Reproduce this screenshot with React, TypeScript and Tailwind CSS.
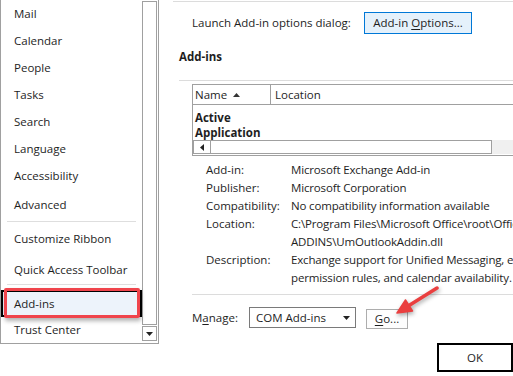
import React from "react"

const navTop = ['Mail', 'Calendar', 'People', 'Tasks', 'Search', 'Language', 'Accessibility']

const details: { label: string, lines: string[] }[] = [
	{ label: 'Add-in:', lines: ['Microsoft Exchange Add-in'] },
	{ label: 'Publisher:', lines: ['Microsoft Corporation'] },
	{ label: 'Compatibility:', lines: ['No compatibility information available'] },
	{ label: 'Location:', lines: ['C:\\Program Files\\Microsoft Office\\root\\Office16\\', 'ADDINS\\UmOutlookAddin.dll'] },
	{ label: 'Description:', lines: ['Exchange support for Unified Messaging, e-mail', 'permission rules, and calendar availability.'] },
]

const NavItem = ({ label, h }: { label: string, h: string }) => (
	<div className={`flex items-center pl-[13px] whitespace-nowrap ${h}`}>{ label }</div>
)

const LeftNav = () => (
	<div className="w-[159px] h-[344px] shrink-0 border-l border-r border-b border-[#a0a0a0] flex">
		<div className="w-[141px] flex flex-col">
			{ navTop.map((n) => <NavItem key={ n } label={ n } h="h-[27px]" />) }
			<NavItem label="Advanced" h="h-[32px]" />
			<div className="h-px mx-[6px] bg-[#dedede]" />
			<NavItem label="Customize Ribbon" h="h-[34px]" />
			<NavItem label="Quick Access Toolbar" h="h-[28px]" />
			<div className="h-px mx-[6px] bg-[#dedede]" />
			{/* selected item */ }
			<div className="relative h-[30px] mt-[3px]">
				<div className="absolute left-0 right-0 top-[2px] bottom-[1px] border-2 border-black bg-[#edf3fb]" />
				<div className="absolute left-[3px] right-[2px] top-0 bottom-0 border-[3px] border-[#f0444c] rounded-[2px] shadow-[1px_3px_4px_rgba(0,0,0,0.3)]" />
				<div className="relative h-full flex items-center pl-[13px] pt-px">Add-ins</div>
			</div>
			<NavItem label="Trust Center" h="h-[24px]" />
		</div>
		<div className="w-[15px] flex flex-col pt-px pb-[2px]">
			<div className="flex-1 border border-[#a0a0a0]" />
			<div className="h-[15px] mt-px border border-[#a0a0a0] flex items-center justify-center">
				<svg width="7" height="4" viewBox="0 0 7 4"><path d="M0 0h7L3.5 4z" fill="#222" /></svg>
			</div>
		</div>
	</div>
)

const RightPane = () => (
	<div className="flex-1 ml-[14px] mt-px border-t border-[#dcdcdc] min-w-0">
		<div className="mt-[10px] pl-[19px] flex items-center h-[22px]">
			<span className="w-[172px] whitespace-nowrap">Launch Add-in options dialog:</span>
			<button className="w-[108px] h-[22px] border border-[#0078d7] bg-[#e5f1fb] flex items-center justify-center whitespace-nowrap">
				Add-in&nbsp;<span className="underline underline-offset-2">O</span>ptions...
			</button>
		</div>

		<div className="mt-[15px] h-[16px] leading-[16px] pl-[6px] font-bold">Add-ins</div>
		<div className="mt-[15px] ml-[6px] h-px bg-[#dcdcdc]" />

		{/* list */ }
		<div className="mt-[3px] ml-[19px] w-[340px] border border-[#a0a0a0]">
			<div className="h-[20px] border-b border-[#a0a0a0] flex">
				<div className="w-[78px] border-r border-[#a0a0a0] flex items-center pl-[2px] gap-[6px]">
					Name
					<svg width="7" height="4" viewBox="0 0 7 4"><path d="M0 4h7L3.5 0z" fill="#333" /></svg>
				</div>
				<div className="flex items-center pl-[4px]">Location</div>
			</div>
			<div className="pt-[5px] pl-[2px] leading-[15px] font-bold">
				<div>Active</div>
				<div>Application</div>
			</div>
			<div className="h-[14px] mb-px flex">
				<div className="w-[18px] border border-[#a0a0a0] flex items-center justify-center">
					<svg width="4" height="7" viewBox="0 0 4 7"><path d="M4 0v7L0 3.5z" fill="#222" /></svg>
				</div>
				<div className="w-[281px] border border-l-0 border-[#a0a0a0]" />
				<div className="flex-1 bg-[#f0f0f0]" />
			</div>
		</div>

		<div className="mt-[5px] pl-[33px] leading-[18px]">
			{ details.map((d) => (
				<div key={ d.label } className="flex">
					<div className="w-[85px] shrink-0">{ d.label }</div>
					<div className="whitespace-nowrap tracking-[-0.15px]">
						{ d.lines.map((l) => <div key={ l }>{ l }</div>) }
					</div>
				</div>
			)) }
		</div>

		<div className="mt-[7px] ml-[19px] h-px bg-[#dcdcdc]" />

		<div className="mt-[12px] ml-[19px] flex items-start">
			<div className="w-[57px] h-[21px] leading-[21px]">M<span className="underline underline-offset-2">a</span>nage:</div>
			<div className="w-[107px] h-[21px] border border-[#7a7a7a] flex items-center justify-between pl-[6px] pr-[5px]">
				<span>COM Add-ins</span>
				<svg width="7" height="4" viewBox="0 0 7 4"><path d="M0 0h7L3.5 4z" fill="#222" /></svg>
			</div>
			<button className="ml-[10px] mt-[2px] w-[42px] h-[20px] border border-[#adadad] bg-[#fdfdfd] flex items-center justify-center">
				<span className="underline underline-offset-2">G</span>o...
			</button>
		</div>

		<div className="mt-[14px] flex justify-end">
			<button className="w-[76px] h-[29px] border-2 border-black flex items-center justify-center">OK</button>
		</div>
	</div>
)

export default function App() {
	return (
		<div className="relative w-[513px] h-[376px] overflow-hidden bg-white flex font-['Open_Sans',sans-serif] text-[11.5px] text-[#1e1e1e]">
			<LeftNav />
			<RightPane />
			{/* annotation arrow */ }
			<svg className="absolute left-0 top-0 pointer-events-none drop-shadow-[1px_2px_2px_rgba(0,0,0,0.35)]" width="513" height="376" viewBox="0 0 513 376">
				<line x1="437" y1="288" x2="409" y2="305.5" stroke="#ea3f3f" strokeWidth="3.5" strokeLinecap="round" />
				<path d="M397 313 L412.5 311 L405.5 300 Z" fill="#ea3f3f" stroke="#ea3f3f" strokeWidth="1.5" strokeLinejoin="round" />
			</svg>
		</div>
	)
}
